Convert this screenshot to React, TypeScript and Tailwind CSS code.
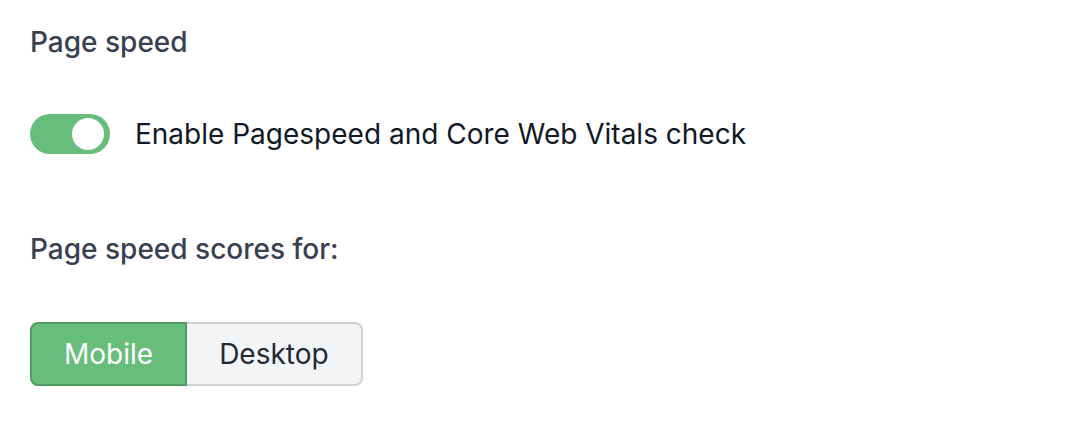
import React, { useState } from 'react';

export default function App() {
  const [enabled, setEnabled] = useState(true);
  const [device, setDevice] = useState<'mobile' | 'desktop'>('mobile');

  return (
    <div
      className="min-h-screen bg-white pl-[30px] pt-[22px]"
      style={{ fontFamily: 'Inter, "Noto Sans", sans-serif' }}
    >
      {/* Heading */}
      <h2 className="text-[28px] leading-[40px] font-medium text-[#374151]">Page speed</h2>

      {/* Toggle row */}
      <div className="mt-[52px] flex items-center gap-[25px]">
        <button
          onClick={() => setEnabled(!enabled)}
          className={`relative h-[40px] w-[80px] rounded-full transition-colors ${
            enabled ? 'bg-[#67bd7b]' : 'bg-[#d1d5db]'
          }`}
        >
          <span
            className={`absolute top-[4px] h-[32px] w-[32px] rounded-full bg-white transition-all ${
              enabled ? 'left-[42px]' : 'left-[4px]'
            }`}
          />
        </button>
        <span className="text-[28px] leading-[40px] text-[#111827]">
          Enable Pagespeed and Core Web Vitals check
        </span>
      </div>

      {/* Device selector */}
      <p className="mt-[75px] text-[28px] leading-[40px] font-medium text-[#374151]">
        Page speed scores for:
      </p>

      <div className="mt-[53px] flex">
        <button
          onClick={() => setDevice('mobile')}
          className={`h-[64px] rounded-l-[8px] border-2 px-[32px] text-[28px] ${
            device === 'mobile'
              ? 'border-[#4f9b61] bg-[#67bd7b] text-white'
              : 'border-[#cfd1d4] bg-[#f3f4f6] text-[#1f2937]'
          }`}
        >
          Mobile
        </button>
        <button
          onClick={() => setDevice('desktop')}
          className={`h-[64px] rounded-r-[8px] border-2 border-l-0 px-[32px] text-[28px] ${
            device === 'desktop'
              ? 'border-[#4f9b61] bg-[#67bd7b] text-white'
              : 'border-[#cfd1d4] bg-[#f3f4f6] text-[#1f2937]'
          }`}
        >
          Desktop
        </button>
      </div>
    </div>
  );
}
